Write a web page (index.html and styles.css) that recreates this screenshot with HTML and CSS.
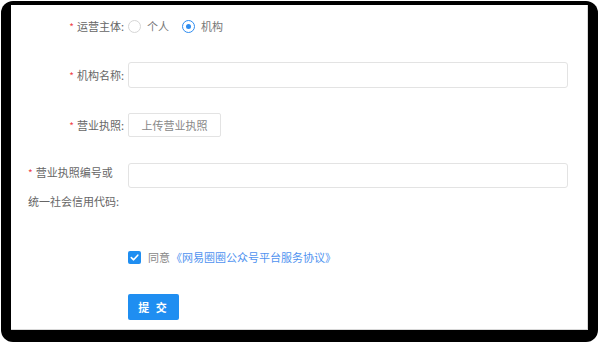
FILE: index.html
```html
<!DOCTYPE html>
<html lang="zh-CN">
<head>
<meta charset="utf-8">
<link rel="stylesheet" href="styles.css">
</head>
<body>
<div class="frame">
  <div class="card">
    <div class="row row-type">
      <div class="label"><span class="req">*</span>运营主体:</div>
      <div class="radios">
        <label class="radio"><span class="dot"></span>个人</label>
        <label class="radio on"><span class="dot"></span>机构</label>
      </div>
    </div>
    <div class="row row-name">
      <div class="label"><span class="req">*</span>机构名称:</div>
      <div class="input"></div>
    </div>
    <div class="row row-lic">
      <div class="label"><span class="req">*</span>营业执照:</div>
      <div class="upload">上传营业执照</div>
    </div>
    <div class="row row-code">
      <div class="label label-wrap"><span class="req">*</span>营业执照编号或<br>统一社会信用代码:</div>
      <div class="input input-code"></div>
    </div>
    <div class="row row-agree">
      <span class="check"><svg width="9" height="9" viewBox="0 0 9 9"><path d="M1.3 4.6 L3.6 6.8 L7.8 2.2" fill="none" stroke="#fff" stroke-width="1.6" stroke-linecap="round" stroke-linejoin="round"/></svg></span>
      <span class="agree">同意</span><a class="link">《网易圈圈公众号平台服务协议》</a>
    </div>
    <div class="row row-submit">
      <div class="submit">提 交</div>
    </div>
  </div>
</div>
</body>
</html>
```

FILE: styles.css
```css
html, body {
  margin: 0;
  padding: 0;
  background: #fff;
}
body {
  width: 600px;
  height: 347px;
  overflow: hidden;
  font-family: "Noto Sans CJK SC", "Noto Sans", sans-serif;
  font-size: 11px;
  color: #666;
}
.frame {
  margin: 1px 0 0 1px;
  width: 597px;
  height: 341px;
  box-sizing: border-box;
  background: #000;
  border-radius: 12px;
  padding: 4px 10px 12px 10px;
}
.card {
  height: 100%;
  background: #fff;
  box-sizing: border-box;
  border-right: 1px solid #d8d8d8;
  border-bottom: 1px solid #d8d8d8;
  display: flex;
  flex-direction: column;
}
.row {
  display: flex;
  align-items: center;
  padding-left: 17px;
}
.label {
  width: 96px;
  margin-right: 4px;
  text-align: right;
  color: #666;
  white-space: nowrap;
}
.req {
  color: #f0434a;
  margin-right: 3px;
  font-size: 10px;
}
.row-type { margin-top: 8px; height: 26px; }
.row-name { margin-top: 23px; }
.row-lic { margin-top: 25px; }
.row-code { margin-top: 21px; align-items: flex-start; }
.row-agree { margin-top: 32px; height: 20px; padding-left: 117px; }
.row-submit { margin-top: 27px; padding-left: 117px; }

.radios { display: flex; align-items: center; }
.radio {
  display: flex;
  align-items: center;
  margin-right: 13px;
  color: #777;
}
.radio .dot {
  width: 11px;
  height: 11px;
  border: 1px solid #d6d6d6;
  border-radius: 50%;
  margin-right: 6px;
  box-sizing: content-box;
  position: relative;
}
.radio.on .dot {
  border-color: #2d8cf0;
}
.radio.on .dot::after {
  content: "";
  position: absolute;
  left: 3px;
  top: 3px;
  width: 5px;
  height: 5px;
  border-radius: 50%;
  background: #2d8cf0;
}
.input {
  width: 440px;
  height: 26px;
  box-sizing: border-box;
  border: 1px solid #e3e3e3;
  border-radius: 3px;
  background: #fff;
}
.upload {
  width: 93px;
  height: 24px;
  box-sizing: border-box;
  border: 1px solid #e3e3e3;
  border-radius: 2px;
  display: flex;
  align-items: center;
  justify-content: center;
  color: #888;
}
.label-wrap {
  text-align: left;
  line-height: 28px;
}
.input-code {
  margin-top: 5px;
  height: 25px;
}
.check {
  width: 13px;
  height: 13px;
  border-radius: 2px;
  background: #1f8ef1;
  display: flex;
  align-items: center;
  justify-content: center;
  margin-right: 7px;
}
.agree { color: #888; margin-right: 1px; }
.link { color: #4f93f0; }
.submit {
  width: 51px;
  height: 26px;
  border-radius: 2px;
  background: #1f8ef1;
  color: #fff;
  display: flex;
  align-items: center;
  justify-content: center;
  letter-spacing: 2px;
  font-weight: bold;
}
```
